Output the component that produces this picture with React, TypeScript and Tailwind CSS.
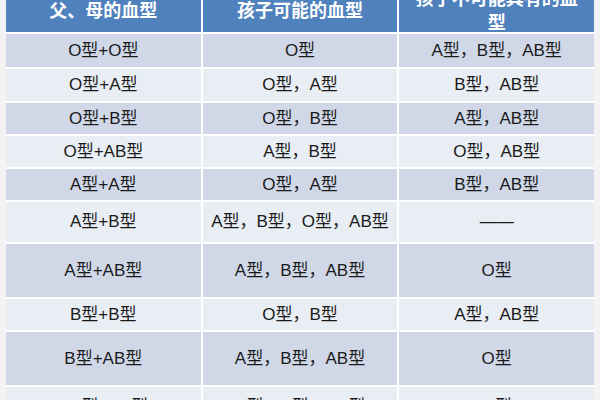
import React from 'react';

const rows = [
  { parents: 'O型+O型', can: 'O型', cannot: 'A型，B型，AB型', h: 'h-[33px]', tone: 'dark' },
  { parents: 'O型+A型', can: 'O型，A型', cannot: 'B型，AB型', h: 'h-[32px]', tone: 'light' },
  { parents: 'O型+B型', can: 'O型，B型', cannot: 'A型，AB型', h: 'h-[31px]', tone: 'dark' },
  { parents: 'O型+AB型', can: 'A型，B型', cannot: 'O型，AB型', h: 'h-[31px]', tone: 'light' },
  { parents: 'A型+A型', can: 'O型，A型', cannot: 'B型，AB型', h: 'h-[31px]', tone: 'dark' },
  { parents: 'A型+B型', can: 'A型，B型，O型，AB型', cannot: '——', h: 'h-[40px]', tone: 'light' },
  { parents: 'A型+AB型', can: 'A型，B型，AB型', cannot: 'O型', h: 'h-[53px]', tone: 'dark' },
  { parents: 'B型+B型', can: 'O型，B型', cannot: 'A型，AB型', h: 'h-[31px]', tone: 'light' },
  { parents: 'B型+AB型', can: 'A型，B型，AB型', cannot: 'O型', h: 'h-[53px]', tone: 'dark' },
  { parents: 'AB型+AB型', can: 'A型，B型，AB型', cannot: 'O型', h: 'h-[40px]', tone: 'light' },
];

const App = () => {
  return (
    <div className="w-[600px] h-[400px] overflow-hidden bg-[#f3f3f3] px-[6px] [font-family:'Liberation_Sans','Noto_Sans_CJK_SC',sans-serif]">
      <div className="-mt-[22px] grid grid-cols-3 gap-x-[2px] gap-y-[2px] bg-white">
        {/* header */}
        <div className="h-[54px] bg-[#4f81bd] text-white text-[18px] font-bold flex items-center justify-center pt-[8px] [font-family:'Noto_Sans_CJK_SC',serif]">
          父、母的血型
        </div>
        <div className="h-[54px] bg-[#4f81bd] text-white text-[18px] font-bold flex items-center justify-center pt-[8px] [font-family:'Noto_Sans_CJK_SC',serif]">
          孩子可能的血型
        </div>
        <div className="h-[54px] bg-[#4f81bd] text-white text-[18px] font-bold flex flex-col items-center justify-start leading-[24px] pt-[7px] [font-family:'Noto_Sans_CJK_SC',serif]">
          <span>孩子不可能具有的血</span>
          <span>型</span>
        </div>

        {rows.map((row, index) => {
          const bg = row.tone === 'dark' ? 'bg-[#d0d8e8]' : 'bg-[#e9edf4]';
          return (
            <React.Fragment key={index}>
              <div className={`${row.h} ${bg} flex items-center justify-center text-[17px] text-[#1a1a1a]`}>
                {row.parents}
              </div>
              <div className={`${row.h} ${bg} flex items-center justify-center text-[17px] text-[#1a1a1a]`}>
                {row.can}
              </div>
              <div className={`${row.h} ${bg} flex items-center justify-center text-[17px] text-[#1a1a1a]`}>
                {row.cannot}
              </div>
            </React.Fragment>
          );
        })}
      </div>
    </div>
  );
};

export default App;
